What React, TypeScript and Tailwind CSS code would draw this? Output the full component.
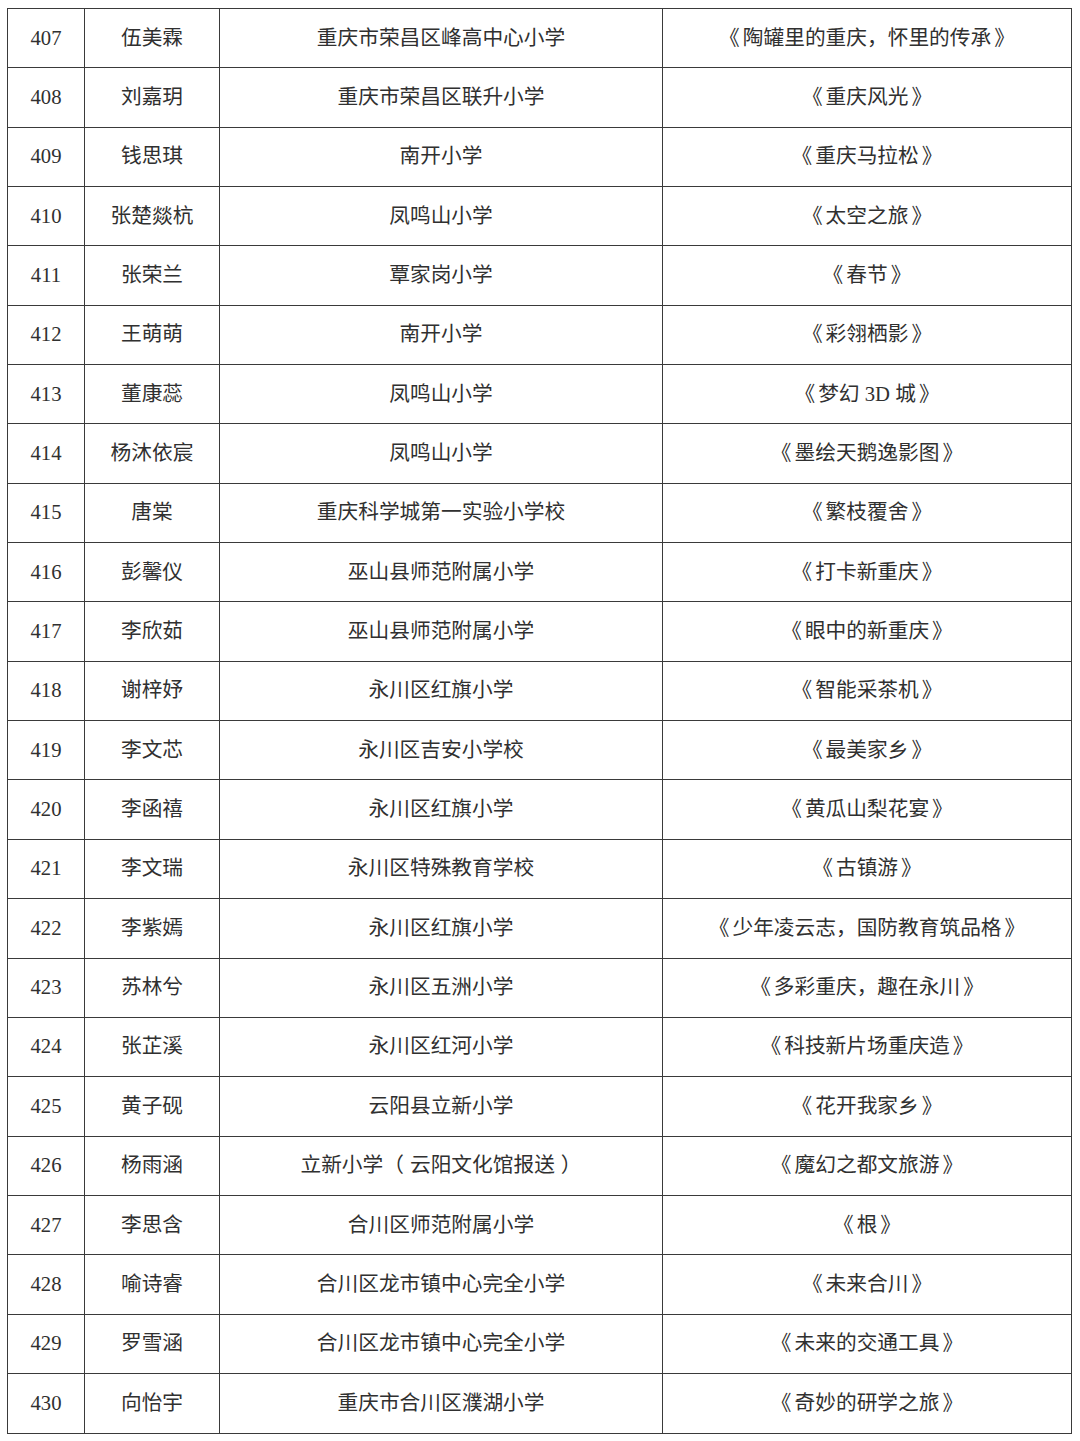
const rows: [string, string, string, string][] = [
  ["407", "伍美霖", "重庆市荣昌区峰高中心小学", "《陶罐里的重庆，怀里的传承》"],
  ["408", "刘嘉玥", "重庆市荣昌区联升小学", "《重庆风光》"],
  ["409", "钱思琪", "南开小学", "《重庆马拉松》"],
  ["410", "张楚燚杭", "凤鸣山小学", "《太空之旅》"],
  ["411", "张荣兰", "覃家岗小学", "《春节》"],
  ["412", "王萌萌", "南开小学", "《彩翎栖影》"],
  ["413", "董康蕊", "凤鸣山小学", "《梦幻 3D 城》"],
  ["414", "杨沐依宸", "凤鸣山小学", "《墨绘天鹅逸影图》"],
  ["415", "唐棠", "重庆科学城第一实验小学校", "《繁枝覆舍》"],
  ["416", "彭馨仪", "巫山县师范附属小学", "《打卡新重庆》"],
  ["417", "李欣茹", "巫山县师范附属小学", "《眼中的新重庆》"],
  ["418", "谢梓妤", "永川区红旗小学", "《智能采茶机》"],
  ["419", "李文芯", "永川区吉安小学校", "《最美家乡》"],
  ["420", "李函禧", "永川区红旗小学", "《黄瓜山梨花宴》"],
  ["421", "李文瑞", "永川区特殊教育学校", "《古镇游》"],
  ["422", "李紫嫣", "永川区红旗小学", "《少年凌云志，国防教育筑品格》"],
  ["423", "苏林兮", "永川区五洲小学", "《多彩重庆，趣在永川》"],
  ["424", "张芷溪", "永川区红河小学", "《科技新片场重庆造》"],
  ["425", "黄子砚", "云阳县立新小学", "《花开我家乡》"],
  ["426", "杨雨涵", "立新小学（云阳文化馆报送）", "《魔幻之都文旅游》"],
  ["427", "李思含", "合川区师范附属小学", "《根》"],
  ["428", "喻诗睿", "合川区龙市镇中心完全小学", "《未来合川》"],
  ["429", "罗雪涵", "合川区龙市镇中心完全小学", "《未来的交通工具》"],
  ["430", "向怡宇", "重庆市合川区濮湖小学", "《奇妙的研学之旅》"],
];

// brackets get a little air, like the Song face in the original
const Txt = ({ s }: { s: string }) => (
  <>
    {Array.from(s).map((c, i) => {
      if (c === "《") return <span key={i} className="mr-[3px]">{c}</span>;
      if (c === "》") return <span key={i} className="ml-[3px]">{c}</span>;
      if (c === "（") return <span key={i} className="mr-[6px]">{c}</span>;
      if (c === "）") return <span key={i} className="ml-[6px]">{c}</span>;
      return <span key={i}>{c}</span>;
    })}
  </>
);

export default function App() {
  return (
    <div className="w-[1080px] h-[1441px] bg-white pt-[8px] pl-[7px]">
      <div
        className="w-[1065px] border border-[#3a3a3a] text-[20.7px] text-[#303030]"
        style={{ fontFamily: '"Liberation Serif", "Noto Sans CJK SC", serif' }}
      >
        {rows.map((r, i) => (
          <div
            key={r[0]}
            className={
              "grid grid-cols-[77px_135px_443px_1fr] h-[59.35px] " +
              (i < rows.length - 1 ? "border-b border-[#3a3a3a]" : "")
            }
          >
            <div className="flex items-center justify-center border-r border-[#3a3a3a]">{r[0]}</div>
            <div className="flex items-center justify-center border-r border-[#3a3a3a]">{r[1]}</div>
            <div className="flex items-center justify-center border-r border-[#3a3a3a] whitespace-pre">
              <Txt s={r[2]} />
            </div>
            <div className="flex items-center justify-center whitespace-pre">
              <Txt s={r[3]} />
            </div>
          </div>
        ))}
      </div>
    </div>
  );
}
